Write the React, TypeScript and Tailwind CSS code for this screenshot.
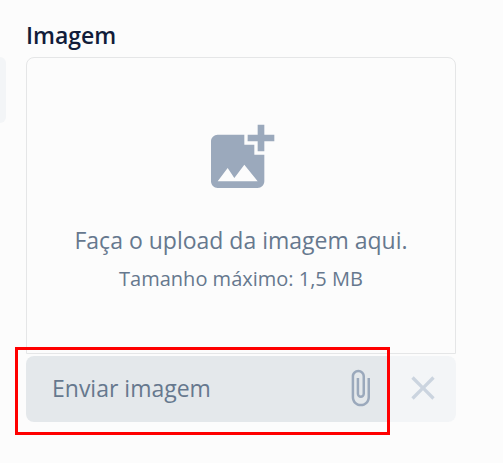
import { MdAddPhotoAlternate, MdAttachFile, MdClose } from 'react-icons/md';

function DropArea() {
  return (
    <div className="flex flex-col items-center rounded-t-lg border border-[#e5e6e7] px-4 pt-[60px] pb-[58px]">
      <MdAddPhotoAlternate className="h-20 w-20 text-[#9ba9bc]" aria-hidden="true" />
      <p className="mt-6 text-[23px] leading-9">Faça o upload da imagem aqui.</p>
      <p className="mt-[5px] text-xl leading-8">Tamanho máximo: 1,5 MB</p>
    </div>
  );
}

function UploadBar() {
  return (
    <div className="relative mt-0.5 flex h-[66px]">
      <button
        type="button"
        className="flex flex-1 items-center justify-between rounded-l-lg bg-[#e4e8eb] pr-2.5 pb-0.5 pl-[26px] text-[23px]"
      >
        Enviar imagem
        <MdAttachFile className="h-10 w-10 text-[#9ba9bc]" aria-hidden="true" />
      </button>
      <button
        type="button"
        aria-label="Remover imagem"
        className="flex w-[66px] items-center justify-center rounded-r-lg bg-[#f3f5f7] pb-0.5"
      >
        <MdClose className="h-10 w-10 text-[#cbd4df]" aria-hidden="true" />
      </button>
      {/* highlight around the upload button */}
      <div className="pointer-events-none absolute -top-[9px] right-[66px] -bottom-[13px] -left-[11px] border-[3px] border-[#ff0000]" />
    </div>
  );
}

export default function App() {
  return (
    <main className="flex min-h-screen gap-5 bg-[#fcfcfc] pr-[47px] font-['Open_Sans',sans-serif] text-[#66788e]">
      {/* edge of the neighbouring field */}
      <div className="mt-[57px] h-[66px] w-1.5 shrink-0 rounded-r-lg bg-[#f3f5f7]" />
      <section className="flex-1 pt-[17px]">
        <h2 className="mb-1 text-[23px] leading-9 font-semibold text-[#111c3a]">Imagem</h2>
        <DropArea />
        <UploadBar />
      </section>
    </main>
  );
}
